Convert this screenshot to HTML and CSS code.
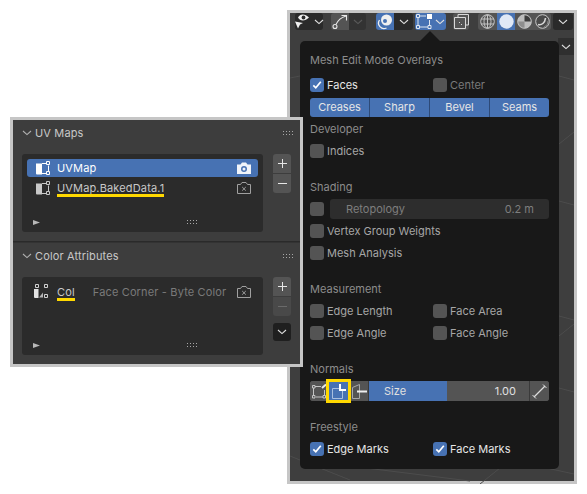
FILE: index.html
```html
<!DOCTYPE html>
<html lang="en">

<head>
  <meta charset="UTF-8" />
  <meta name="viewport" content="width=device-width, initial-scale=1.0" />
  <title>Mesh Edit Mode Overlays</title>
  <link rel="stylesheet" href="styles.css">
</head>

<body>
  <svg class="defs" width="0" height="0">
    <symbol id="grip" viewBox="0 0 11 5">
      <path d="M0 0h1v1H0zM3 0h1v1H3zM6 0h1v1H6zM9 0h1v1H9zM0 3h1v1H0zM3 3h1v1H3zM6 3h1v1H6zM9 3h1v1H9z" fill="#a8a8a8" />
    </symbol>
    <symbol id="chev" viewBox="0 0 10 6">
      <path d="M1 1l4 3.600L9 1" fill="none" stroke="currentColor" stroke-width="1.100" />
    </symbol>
    <symbol id="uv" viewBox="0 0 14 14">
      <path d="M0 2.500h6v11H1a1 1 0 0 1-1-1z" fill="currentColor" />
      <path d="M6 2.500h4.500M12.500 4.500v6M6 12.500h4.500" fill="none" stroke="currentColor" />
      <path d="M10.500 .5h3v3h-3zM10.500 10.500h3v3h-3z" fill="none" stroke="currentColor" />
    </symbol>
    <symbol id="cam-off" viewBox="0 0 14 12">
      <path d="M.5 2.500h3l1.500-2h4l1.500 2h3v9H.5z" fill="none" stroke="#a0a0a0" />
      <path d="M5.200 5l3.600 3.600M8.800 5L5.200 8.600" stroke="#a0a0a0" />
    </symbol>
    <symbol id="tri" viewBox="0 0 7 5">
      <path d="M0 0l7 2.500L0 5z" fill="#b8b8b8" />
    </symbol>
    <symbol id="plus" viewBox="0 0 9 9">
      <path d="M4.500 0v9M0 4.500h9" stroke="currentColor" />
    </symbol>
    <symbol id="minus" viewBox="0 0 9 9">
      <path d="M0 4.500h9" stroke="currentColor" />
    </symbol>
    <symbol id="tick" viewBox="0 0 14 14">
      <path d="M3.300 7.300l2.500 2.500 5-6" fill="none" stroke="#fff" stroke-width="1.700" />
    </symbol>
  </svg>

  <!-- viewport window with the overlay popover -->
  <div class="window viewport">
    <svg class="floor" width="284" height="468" viewBox="0 0 284 468">
      <path d="M0 62l60-12 70 10M269 60l15 4M269 128l15-12M269 185l15 4M269 300l15 4M269 320l15-12M269 372l15 4M0 440l60 24M190 468l30-24 64 14M20 445l160 20" fill="none" stroke="#4c4c4c" />
    </svg>

    <div class="toolbar">
      <div class="tool dark w28">
        <svg class="eye" width="15" height="15" viewBox="0 0 15 15">
          <path d="M3 3.500C5-.5 10-.5 14 3.500 10 7.500 5 7.500 3 3.500z" fill="#f0f0f0" />
          <circle cx="8.500" cy="3.500" r="1.900" fill="#2a2a2a" />
          <path d="M0 7.500l8 1.500-3 1.500-2 4z" fill="#f0f0f0" />
        </svg>
        <svg class="chev" width="10" height="6"><use href="#chev" /></svg>
      </div>
      <div class="tool-pair ml8">
        <div class="tool grey w18">
          <svg width="16" height="16" viewBox="0 0 16 16">
            <path d="M4 10.500C6 6 9 3.500 14 2M9.500 1.500h5v5" fill="none" stroke="#e8e8e8" stroke-width="1.100" />
            <circle cx="3" cy="12.500" r="2" fill="none" stroke="#e8e8e8" stroke-width="1.100" />
          </svg>
        </div>
        <div class="tool faded w17"><svg class="chev off" width="10" height="6"><use href="#chev" /></svg></div>
      </div>
      <div class="tool-pair ml10">
        <div class="tool blue w18">
          <svg width="16" height="16" viewBox="0 0 16 16">
            <circle cx="9.500" cy="6" r="5.500" fill="#f0f0f0" />
            <circle cx="8" cy="7" r="2" fill="#4772b3" />
            <path d="M2.500 6a5.500 5.500 0 0 0 7 8" fill="none" stroke="#f0f0f0" stroke-width="1.300" />
          </svg>
        </div>
        <div class="tool dark w19"><svg class="chev" width="10" height="6"><use href="#chev" /></svg></div>
      </div>
      <div class="tool blue w31 ml2">
        <svg width="16" height="15" viewBox="0 0 16 15">
          <path d="M2 3.500v8M4 13h8M13.500 6v5M4 2h6" fill="none" stroke="#dfe6f0" />
          <path d="M.5 .5h3v3h-3zM.5 11.500h3v3h-3zM12 11.500h3v3h-3z" fill="none" stroke="#dfe6f0" />
          <path d="M11 0h5v5h-5z" fill="#fff" />
        </svg>
        <svg class="chev" width="10" height="6"><use href="#chev" /></svg>
      </div>
      <div class="tool grey w16 ml7">
        <svg width="15" height="15" viewBox="0 0 15 15">
          <path d="M4 3V.5h10.500V11H12" fill="none" stroke="#d8d8d8" />
          <path d="M.5 3.500h11v11H.5z" fill="none" stroke="#d8d8d8" />
          <path d="M5 8h1v1H5zM7 10h1v1H7z" fill="#d8d8d8" />
        </svg>
      </div>
      <div class="tool-pair ml9">
        <div class="tool grey w19">
          <svg width="15" height="15" viewBox="0 0 15 15">
            <circle cx="7.500" cy="7.500" r="6.800" fill="none" stroke="#c4c4c4" />
            <path d="M1 5h13M1 10h13M7.500 1v13" stroke="#c4c4c4" fill="none" />
            <ellipse cx="7.500" cy="7.500" rx="3.500" ry="6.800" fill="none" stroke="#c4c4c4" />
          </svg>
        </div>
        <div class="tool blue w18">
          <svg width="15" height="15" viewBox="0 0 15 15"><circle cx="7.500" cy="7.500" r="7.200" fill="#dfe8f6" /></svg>
        </div>
        <div class="tool grey w18">
          <svg width="15" height="15" viewBox="0 0 15 15">
            <circle cx="7.500" cy="7.500" r="6.800" fill="#bdbdbd" stroke="#c9c9c9" />
            <path d="M7.500 1.200A6.300 6.300 0 0 1 13.800 7.500H7.500z" fill="#3c3c3c" />
            <path d="M7.500 7.500H1.200A6.300 6.300 0 0 0 7.500 13.800z" fill="#8e8e8e" />
          </svg>
        </div>
        <div class="tool grey w18">
          <svg width="15" height="15" viewBox="0 0 15 15">
            <circle cx="7.500" cy="7.500" r="6.800" fill="#4a4a4a" stroke="#c9c9c9" />
            <path d="M3 10.500c3.500 1 7-1.500 7.500-6.500" fill="none" stroke="#d8d8d8" stroke-width="1.600" />
            <path d="M9 13c2.500-1 4-3 4-6" fill="none" stroke="#8a8a8a" />
          </svg>
        </div>
      </div>
      <div class="tool dark w20 ml2"><svg class="chev" width="10" height="6"><use href="#chev" /></svg></div>
    </div>
    <div class="side-btn"><svg class="chev" width="10" height="6"><use href="#chev" /></svg></div>
  </div>

  <div class="popover">
    <div class="arrow"></div>
    <div class="label">Mesh Edit Mode Overlays</div>
    <div class="row first-row">
      <label class="check on"><i class="box"><svg width="14" height="14"><use href="#tick" /></svg></i>Faces</label>
      <label class="check col2"><i class="box"></i><span class="dim">Center</span></label>
    </div>
    <div class="segments">
      <span>Creases</span><span>Sharp</span><span>Bevel</span><span>Seams</span>
    </div>
    <div class="label section-sm">Developer</div>
    <div class="row"><label class="check"><i class="box"></i>Indices</label></div>

    <div class="label section">Shading</div>
    <div class="row field-row">
      <label class="check"><i class="box"></i></label>
      <div class="field"><span>Retopology</span><span>0.2 m</span></div>
    </div>
    <div class="row flush"><label class="check"><i class="box"></i>Vertex Group Weights</label></div>
    <div class="row flush"><label class="check"><i class="box"></i>Mesh Analysis</label></div>

    <div class="label section">Measurement</div>
    <div class="row">
      <label class="check"><i class="box"></i>Edge Length</label>
      <label class="check col2"><i class="box"></i>Face Area</label>
    </div>
    <div class="row flush">
      <label class="check"><i class="box"></i>Edge Angle</label>
      <label class="check col2"><i class="box"></i>Face Angle</label>
    </div>

    <div class="label section">Normals</div>
    <div class="normals">
      <div class="nbtn w19">
        <svg width="15" height="15" viewBox="0 0 15 15">
          <path d="M1.500 4v8M4 13h7M12.500 6v6M3 2.500h6" fill="none" stroke="#c4c4c4" />
          <path d="M.5 1.500h2.500v2.500H.5zM.5 11.500h2.500v2.500H.5zM11 11.500h2.500v2.500H11z" fill="none" stroke="#c4c4c4" />
          <path d="M10 4l4-3.500" stroke="#e6e6e6" stroke-width="2" />
        </svg>
      </div>
      <div class="nbtn blue w22">
        <svg class="corner" width="15" height="15" viewBox="0 0 15 15">
          <path d="M7 4.500H.5v10h10V7" fill="none" stroke="#a9bfdf" />
          <path d="M7 0h2v5h5v2H7z" fill="#fff" />
        </svg>
      </div>
      <div class="nbtn w18">
        <svg width="15" height="15" viewBox="0 0 15 15">
          <path d="M.5 3.500L7.500 .5v14H.5z" fill="none" stroke="#a8a8a8" />
          <path d="M5 6.500h10v2H5z" fill="#eee" />
        </svg>
      </div>
      <div class="slider">
        <div class="slider-fill"></div>
        <span class="slider-name">Size</span>
        <span class="slider-val">1.00</span>
      </div>
      <div class="nbtn w20 last">
        <svg width="15" height="15" viewBox="0 0 15 15">
          <path d="M2 13L13 2" stroke="#dcdcdc" stroke-width="1.200" />
          <path d="M11 .5l3.500 3.500M.5 11L4 14.500" stroke="#dcdcdc" />
        </svg>
      </div>
      <div class="mark"></div>
    </div>

    <div class="label section last-section">Freestyle</div>
    <div class="row">
      <label class="check on"><i class="box"><svg width="14" height="14"><use href="#tick" /></svg></i>Edge Marks</label>
      <label class="check on col2"><i class="box"><svg width="14" height="14"><use href="#tick" /></svg></i>Face Marks</label>
    </div>
  </div>

  <!-- properties window -->
  <div class="window props">
    <section class="panel first">
      <header class="panel-head">
        <svg class="chev" width="10" height="6"><use href="#chev" /></svg>
        <span>UV Maps</span>
        <svg class="grip" width="11" height="5"><use href="#grip" /></svg>
      </header>
      <div class="list-wrap">
        <div class="list">
          <div class="item active">
            <svg class="item-icon" width="14" height="14"><use href="#uv" /></svg>
            <span class="item-name">UVMap</span>
            <svg class="cam" width="14" height="12" viewBox="0 0 14 12">
              <path d="M0 2.500h3.500L5 .5h4l1.500 2H14V12H0z" fill="#f0f4fa" />
              <circle cx="7" cy="7" r="3" fill="#4772b3" />
              <circle cx="7" cy="7" r="1.500" fill="#f0f4fa" />
            </svg>
          </div>
          <div class="item">
            <svg class="item-icon" width="14" height="14"><use href="#uv" /></svg>
            <span class="item-name marked">UVMap.BakedData.1</span>
            <svg class="cam" width="14" height="12"><use href="#cam-off" /></svg>
          </div>
          <div class="list-foot">
            <svg width="7" height="5"><use href="#tri" /></svg>
            <svg class="foot-grip" width="11" height="5"><use href="#grip" /></svg>
          </div>
        </div>
        <div class="side">
          <div class="stack">
            <button><svg width="9" height="9"><use href="#plus" /></svg></button>
            <button><svg width="9" height="9"><use href="#minus" /></svg></button>
          </div>
        </div>
      </div>
    </section>
    <section class="panel second">
      <header class="panel-head">
        <svg class="chev" width="10" height="6"><use href="#chev" /></svg>
        <span>Color Attributes</span>
        <svg class="grip" width="11" height="5"><use href="#grip" /></svg>
      </header>
      <div class="list-wrap">
        <div class="list">
          <div class="item attr">
            <svg class="item-icon" width="15" height="15" viewBox="0 0 15 15">
              <path d="M1.500 .5h3v3h-3zM10.500 .5h3v3h-3zM10.500 10.500h3v3h-3z" fill="none" stroke="#d0d0d0" />
              <path d="M0 5h4.500v9H1a1 1 0 0 1-1-1z" fill="#e4e4e4" />
              <path d="M5 13.500l4-5v5z" fill="#b4b4b4" />
            </svg>
            <span class="item-name marked">Col</span>
            <span class="item-type">Face Corner - Byte Color</span>
            <svg class="cam" width="14" height="12"><use href="#cam-off" /></svg>
          </div>
          <div class="list-foot">
            <svg width="7" height="5"><use href="#tri" /></svg>
            <svg class="foot-grip" width="11" height="5"><use href="#grip" /></svg>
          </div>
        </div>
        <div class="side">
          <div class="stack">
            <button><svg width="9" height="9"><use href="#plus" /></svg></button>
            <button class="off"><svg width="9" height="9"><use href="#minus" /></svg></button>
          </div>
          <button class="menu-btn"><svg class="chev" width="10" height="6"><use href="#chev" /></svg></button>
        </div>
      </div>
    </section>
  </div>
</body>

</html>
```

FILE: styles.css
```css
body {
  margin: 0;
  background-color: #fff;
  font-family: Inter, 'Noto Sans', sans-serif;
  font-size: 11px;
  color: #c8c8c8;
  width: 587px;
  height: 494px;
  overflow: hidden;
  position: relative;
}

.defs {
  position: absolute;
}

svg {
  display: block;
  flex: none;
}

.chev {
  color: #e0e0e0;
}

.chev.off {
  color: #5a5a5a;
}

.window {
  position: absolute;
  box-sizing: border-box;
  border: 3px solid #c6c6c6;
}

/* viewport */
.viewport {
  left: 287px;
  top: 10px;
  width: 290px;
  height: 474px;
  background-color: #3e3e3e;
}

.floor {
  position: absolute;
  left: 0;
  top: 3px;
}

.toolbar {
  position: relative;
  display: flex;
  height: 17px;
  padding-left: 5px;
}

.tool-pair {
  display: flex;
}

.tool {
  height: 17px;
  display: flex;
  align-items: center;
  justify-content: center;
  gap: 3px;
  border-radius: 3px;
}

.tool-pair .tool {
  border-radius: 0;
}

.tool-pair .tool:first-child {
  border-radius: 3px 0 0 3px;
}

.tool-pair .tool:last-child {
  border-radius: 0 3px 3px 0;
}

.tool.dark {
  background-color: #2a2a2a;
}

.tool.grey {
  background-color: #545454;
}

.tool.blue {
  background-color: #4772b3;
}

.tool.faded {
  background-color: #333;
}

.eye {
  margin-right: 1px;
}

.w16 { width: 16px; }
.w17 { width: 17px; }
.w18 { width: 18px; }
.w19 { width: 19px; }
.w20 { width: 20px; }
.w22 { width: 22px; }
.w28 { width: 28px; }
.w31 { width: 31px; }
.ml2 { margin-left: 2px; }
.ml7 { margin-left: 7px; }
.ml8 { margin-left: 8px; }
.ml9 { margin-left: 9px; }
.ml10 { margin-left: 10px; }

.side-btn {
  position: absolute;
  right: 0;
  top: 25px;
  width: 16px;
  height: 17px;
  display: flex;
  align-items: center;
  justify-content: center;
  background-color: #2f2f2f;
}

/* popover */
.popover {
  position: absolute;
  left: 300px;
  top: 41px;
  width: 259px;
  height: 428px;
  box-sizing: border-box;
  padding: 11px 10px 0 10px;
  background-color: #181818;
  border-radius: 5px;
}

.arrow {
  position: absolute;
  left: 120px;
  top: -10px;
  border-left: 10px solid transparent;
  border-right: 10px solid transparent;
  border-bottom: 10px solid #181818;
}

.label {
  height: 16px;
  line-height: 16px;
  color: #8c8c8c;
}

.section {
  margin-top: 17px;
}

.last-section {
  margin-top: 18px;
}

.section-sm {
  margin-top: 4px;
}

.row {
  display: flex;
  height: 22px;
  margin-top: 3px;
  align-items: center;
}

.row.flush {
  margin-top: 0;
}

.row.first-row {
  margin-top: 6px;
}

.check {
  display: flex;
  align-items: center;
  gap: 3px;
  color: #a6a6a6;
}

.check.on {
  color: #e6e6e6;
}

.check.col2 {
  position: absolute;
  left: 133px;
}

.box {
  display: block;
  box-sizing: border-box;
  width: 14px;
  height: 14px;
  background-color: #545454;
  border-radius: 3px;
}

.check.on .box {
  background-color: #4772b3;
}

.dim {
  color: #7a7a7a;
}

.segments {
  display: flex;
  height: 19px;
  margin-top: 2px;
  background-color: #4772b3;
  border-radius: 3px;
  overflow: hidden;
}

.segments span {
  flex: 1;
  text-align: center;
  line-height: 19px;
  color: #e6e6e6;
  border-left: 1px solid #2d4a78;
}

.segments span:first-child {
  border-left: 0;
}

.row.field-row {
  gap: 6px;
  height: 20px;
  margin-top: 4px;
  margin-bottom: 1px;
}

.field {
  flex: 1;
  height: 20px;
  display: flex;
  justify-content: space-between;
  align-items: center;
  padding: 0 15px 0 16px;
  background-color: #2d2d2d;
  border-radius: 3px;
  color: #7e7e7e;
}

.normals {
  position: relative;
  display: flex;
  height: 20px;
  margin-top: 4px;
  border-radius: 3px;
  background-color: #545454;
}

.nbtn {
  display: flex;
  align-items: center;
  justify-content: center;
  height: 20px;
  background-color: #545454;
  border-right: 1px solid #3a3a3a;
  box-sizing: border-box;
}

.nbtn:first-child {
  border-radius: 3px 0 0 3px;
}

.nbtn.blue {
  background-color: #4772b3;
}

.nbtn.last {
  border-right: 0;
  border-left: 1px solid #3a3a3a;
  border-radius: 0 3px 3px 0;
}

.corner {
  margin: 1px 1px 0 0;
}

.slider {
  flex: 1;
  position: relative;
  display: flex;
  justify-content: space-between;
  align-items: center;
  padding: 0 13px 0 15px;
  color: #e0e0e0;
}

.slider-fill {
  position: absolute;
  left: 0;
  top: 0;
  bottom: 0;
  width: 78px;
  background-color: #4772b3;
}

.slider-name,
.slider-val {
  position: relative;
}

.mark {
  position: absolute;
  left: 16px;
  top: -2px;
  width: 25px;
  height: 24px;
  box-sizing: border-box;
  border: 3px solid #ffd800;
}

/* properties */
.props {
  left: 10px;
  top: 117px;
  width: 293px;
  height: 250px;
  background-color: #3d3d3d;
  letter-spacing: 0.15px;
}

.panel {
  padding: 0 9px;
}

.panel.first {
  height: 121px;
  border-bottom: 1px solid #2a2a2a;
}

.panel-head {
  display: flex;
  align-items: center;
  height: 26px;
  color: #c8c8c8;
  gap: 3px;
}

.panel-head .chev {
  color: #b0b0b0;
}

.panel.first .panel-head {
  margin-bottom: 8px;
}

.panel.second {
  border-top: 1px solid #333;
}

.panel.second .panel-head {
  margin-bottom: 8px;
}

.grip {
  margin-left: auto;
  margin-right: -3px;
}

.list-wrap {
  display: flex;
  gap: 10px;
}

.list {
  position: relative;
  width: 241px;
  height: 78px;
  box-sizing: border-box;
  padding: 5px;
  background-color: #2b2b2b;
  border-radius: 3px;
}

.item {
  display: flex;
  align-items: center;
  height: 19px;
  padding: 0 7px 0 9px;
  border-radius: 3px;
  color: #c8c8c8;
}

.item.active {
  height: 18px;
  margin-bottom: 1px;
  background-color: #4772b3;
  color: #fff;
}

.item.attr {
  padding-left: 7px;
}

.item-icon {
  margin-right: 7px;
}

.item.attr .item-icon {
  margin-right: 8px;
}

.item-name {
  position: relative;
}

.marked::after {
  content: "";
  position: absolute;
  left: 0;
  right: 0;
  bottom: -2px;
  height: 3px;
  background-color: #ffd800;
}

.item-type {
  margin-left: 18px;
  color: #7a7a7a;
}

.cam {
  margin-left: auto;
}

.list-foot {
  position: absolute;
  left: 11px;
  bottom: 7px;
  right: 0;
  display: flex;
  align-items: center;
}

.foot-grip {
  margin-left: 147px;
}

.side {
  display: flex;
  flex-direction: column;
  gap: 7px;
}

.stack {
  display: flex;
  flex-direction: column;
  gap: 1px;
}

button {
  display: flex;
  align-items: center;
  justify-content: center;
  width: 18px;
  height: 19px;
  padding: 0;
  border: 0;
  color: #e6e6e6;
  background-color: #545454;
  border-radius: 3px 3px 0 0;
}

button + button {
  border-radius: 0 0 3px 3px;
}

button.off {
  color: #6a6a6a;
  background-color: #494949;
}

.menu-btn {
  height: 18px;
  background-color: #1f1f1f;
  border-radius: 3px;
}
```
